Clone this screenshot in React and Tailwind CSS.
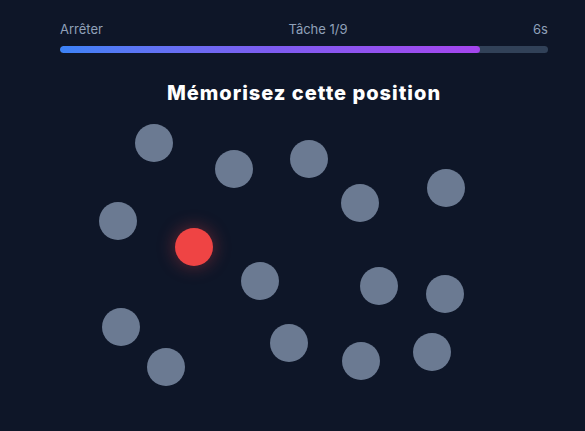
import React from "react";

const dots = [
  { id: 1, x: 75, y: 14 },
  { id: 2, x: 155, y: 40 },
  { id: 3, x: 230, y: 30 },
  { id: 4, x: 281, y: 74 },
  { id: 5, x: 367, y: 59 },
  { id: 6, x: 39, y: 92 },
  { id: 7, x: 115, y: 118, target: true },
  { id: 8, x: 181, y: 152 },
  { id: 9, x: 300, y: 157 },
  { id: 10, x: 366, y: 165 },
  { id: 11, x: 42, y: 198 },
  { id: 12, x: 87, y: 238 },
  { id: 13, x: 210, y: 214 },
  { id: 14, x: 282, y: 232 },
  { id: 15, x: 353, y: 223 },
];

export default function App() {
  return (
    <div
      className="min-h-screen bg-[#0e1628] pt-[20px]"
      style={{ fontFamily: "Inter, 'Noto Sans', sans-serif" }}
    >
      <div className="ml-[60px] w-[488px]">
        {/* Header */}
        <div className="flex items-center justify-between text-[13px] leading-[18px] text-slate-400">
          <button className="hover:text-slate-200">Arrêter</button>
          <span>Tâche 1/9</span>
          <span>6s</span>
        </div>
        <div className="mt-[8px] h-[7px] w-full rounded-full bg-slate-700 overflow-hidden">
          <div className="h-full w-[86%] rounded-full bg-gradient-to-r from-[#3b82f6] via-[#7c5cf0] to-[#a445ee]" />
        </div>

        <h1 className="mt-[26px] text-center text-[20px] leading-[28px] font-extrabold tracking-[0.05em] text-white">
          Mémorisez cette position
        </h1>

        {/* Dots */}
        <div className="relative mt-[3px] h-[300px]">
          {dots.map((d) => (
            <div
              key={d.id}
              className={
                d.target
                  ? "absolute h-[38px] w-[38px] rounded-full bg-[#ef4444] shadow-[0_0_18px_rgba(239,68,68,0.4)]"
                  : "absolute h-[38px] w-[38px] rounded-full bg-[#6b7a92]"
              }
              style={{ left: d.x, top: d.y }}
            />
          ))}
        </div>
      </div>
    </div>
  );
}
